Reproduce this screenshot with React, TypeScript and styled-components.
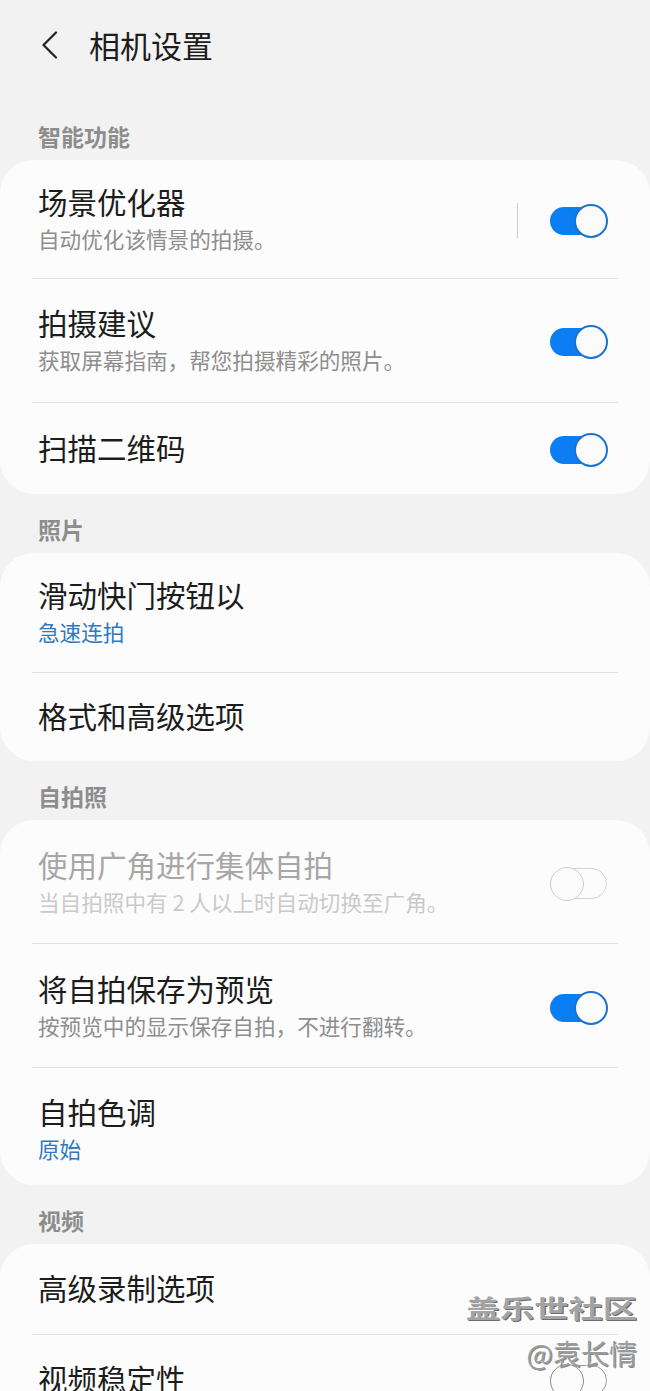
import React from "react";
import styled, { createGlobalStyle } from "styled-components";

const Global = createGlobalStyle`
  html, body { margin: 0; padding: 0; background: #f2f2f2; }
  body {
    font-family: "Noto Sans CJK SC", "Noto Sans", "Liberation Sans", sans-serif;
    -webkit-font-smoothing: antialiased;
  }
`;

const Page = styled.div`
  position: relative;
  width: 650px;
  height: 1391px;
  overflow: hidden;
  background: #f2f2f2;
`;

const Header = styled.header`
  display: flex;
  align-items: center;
  padding: 25px 0 36px 41px;
`;

const BackButton = styled.button`
  display: flex;
  align-items: center;
  justify-content: center;
  width: 17px;
  height: 40px;
  padding: 0;
  margin: 0 31px 0 0;
  border: none;
  background: none;
`;

const Title = styled.h1`
  margin: 0;
  font-size: 31px;
  line-height: 38px;
  font-weight: 400;
  color: #1c1c1c;
`;

const SectionTitle = styled.h2`
  margin: 0;
  padding: 20px 38px 9px;
  font-size: 23px;
  line-height: 30px;
  font-weight: 700;
  color: #8d8d8d;
`;

const Card = styled.section`
  background: #fcfcfc;
  border-radius: 34px;
  overflow: hidden;
`;

const Row = styled.div<{ $pt: number; $pb: number }>`
  display: flex;
  align-items: center;
  padding: ${(p) => p.$pt}px 42px ${(p) => p.$pb}px 38px;
`;

const TextCol = styled.div`
  flex: 1;
  display: flex;
  flex-direction: column;
  min-width: 0;
  margin-top: -3px;
  margin-bottom: 3px;
`;

const RowTitle = styled.div<{ $disabled?: boolean }>`
  font-size: 29.5px;
  line-height: 36px;
  color: ${(p) => (p.$disabled ? "#a6a6a6" : "#1c1c1c")};
`;

type Tone = "grey" | "blue" | "faint";
const toneColor: Record<Tone, string> = {
  grey: "#8e8e8e",
  blue: "#2f78c2",
  faint: "#cacaca",
};

const RowSub = styled.div<{ $tone: Tone }>`
  margin-top: 7px;
  font-size: 21.6px;
  line-height: 26px;
  color: ${(p) => toneColor[p.$tone]};
`;

const Separator = styled.div`
  height: 1px;
  margin: 0 32px;
  background: #e2e2e2;
`;

const VDivider = styled.span`
  width: 1px;
  height: 35px;
  margin-right: 32px;
  background: #cfcfcf;
`;

type SwitchState = "on" | "off" | "disabled";

const SwitchBox = styled.span`
  position: relative;
  display: inline-block;
  width: 58px;
  height: 34px;
  flex: none;
`;

const Track = styled.span<{ $state: SwitchState }>`
  position: absolute;
  left: 0;
  top: ${(p) => (p.$state === "on" ? 3 : 1)}px;
  width: ${(p) => (p.$state === "on" ? 54 : 55)}px;
  height: ${(p) => (p.$state === "on" ? 28 : 29)}px;
  border-radius: 16px;
  background: ${(p) => (p.$state === "on" ? "#0a7ef2" : "transparent")};
  border: ${(p) =>
    p.$state === "on"
      ? "none"
      : p.$state === "disabled"
      ? "1.5px solid #d2d2d2"
      : "1.5px solid #9a9a9a"};
`;

const Knob = styled.span<{ $state: SwitchState }>`
  position: absolute;
  top: 0;
  ${(p) => (p.$state === "on" ? "right: 0;" : "left: 0;")}
  width: 34px;
  height: 34px;
  box-sizing: border-box;
  border-radius: 50%;
  background: #fbfbfb;
  border: ${(p) =>
    p.$state === "on"
      ? "2px solid #1b72d2"
      : p.$state === "disabled"
      ? "1.5px solid #cdcdcd"
      : "1.5px solid #8f8f8f"};
`;

const Switch = ({ state }: { state: SwitchState }) => (
  <SwitchBox>
    <Track $state={state} />
    <Knob $state={state} />
  </SwitchBox>
);

const Watermark = styled.div`
  position: absolute;
  top: 1292px;
  right: 13px;
  display: flex;
  flex-direction: column;
  align-items: flex-end;
  pointer-events: none;
`;

const WmBrand = styled.div`
  font-size: 25px;
  line-height: 30px;
  font-weight: 700;
  color: #a3a3a3;
  transform: scaleX(1.37);
  transform-origin: right center;
  text-shadow: -1px -1px 0 #ffffff, 1px 1px 0 #6c6c6c;
`;

const WmUser = styled.div`
  margin-top: 14px;
  font-size: 28px;
  line-height: 34px;
  font-weight: 400;
  color: #9c9c9c;
  text-shadow: -1px -1px 0 #ffffff, 1px 1px 0 #8a8a8a;
`;

type Item = {
  title: string;
  sub?: string;
  tone?: Tone;
  disabled?: boolean;
  sw?: SwitchState;
  divider?: boolean;
  pt: number;
  pb: number;
};

type Group = { label: string; items: Item[] };

const groups: Group[] = [
  {
    label: "智能功能",
    items: [
      { title: "场景优化器", sub: "自动优化该情景的拍摄。", tone: "grey", sw: "on", divider: true, pt: 26, pb: 23 },
      { title: "拍摄建议", sub: "获取屏幕指南，帮您拍摄精彩的照片。", tone: "grey", sw: "on", pt: 28, pb: 26 },
      { title: "扫描二维码", sw: "on", pt: 29, pb: 26 },
    ],
  },
  {
    label: "照片",
    items: [
      { title: "滑动快门按钮以", sub: "急速连拍", tone: "blue", pt: 26, pb: 24 },
      { title: "格式和高级选项", pt: 27, pb: 25 },
    ],
  },
  {
    label: "自拍照",
    items: [
      {
        title: "使用广角进行集体自拍",
        sub: "当自拍照中有 2 人以上时自动切换至广角。",
        tone: "faint",
        disabled: true,
        sw: "disabled",
        pt: 29,
        pb: 25,
      },
      { title: "将自拍保存为预览", sub: "按预览中的显示保存自拍，不进行翻转。", tone: "grey", sw: "on", pt: 29, pb: 25 },
      { title: "自拍色调", sub: "原始", tone: "blue", pt: 28, pb: 20 },
    ],
  },
  {
    label: "视频",
    items: [
      { title: "高级录制选项", pt: 28, pb: 26 },
      { title: "视频稳定性", sw: "off", pt: 28, pb: 26 },
    ],
  },
];

const BackIcon = () => (
  <svg width="17" height="28" viewBox="0 0 17 28" fill="none">
    <polyline
      points="15,1.5 2.5,14 15,26.5"
      stroke="#222222"
      strokeWidth="2.2"
      strokeLinecap="round"
      strokeLinejoin="round"
    />
  </svg>
);

export default function App() {
  return (
    <Page>
      <Global />
      <Header>
        <BackButton aria-label="返回">
          <BackIcon />
        </BackButton>
        <Title>相机设置</Title>
      </Header>
      {groups.map((g) => (
        <React.Fragment key={g.label}>
          <SectionTitle>{g.label}</SectionTitle>
          <Card>
            {g.items.map((it, i) => (
              <React.Fragment key={it.title}>
                {i > 0 && <Separator />}
                <Row $pt={it.pt} $pb={it.pb}>
                  <TextCol>
                    <RowTitle $disabled={it.disabled}>{it.title}</RowTitle>
                    {it.sub && <RowSub $tone={it.tone ?? "grey"}>{it.sub}</RowSub>}
                  </TextCol>
                  {it.divider && <VDivider />}
                  {it.sw && <Switch state={it.sw} />}
                </Row>
              </React.Fragment>
            ))}
          </Card>
        </React.Fragment>
      ))}
      <Watermark>
        <WmBrand>盖乐世社区</WmBrand>
        <WmUser>@袁长情</WmUser>
      </Watermark>
    </Page>
  );
}
